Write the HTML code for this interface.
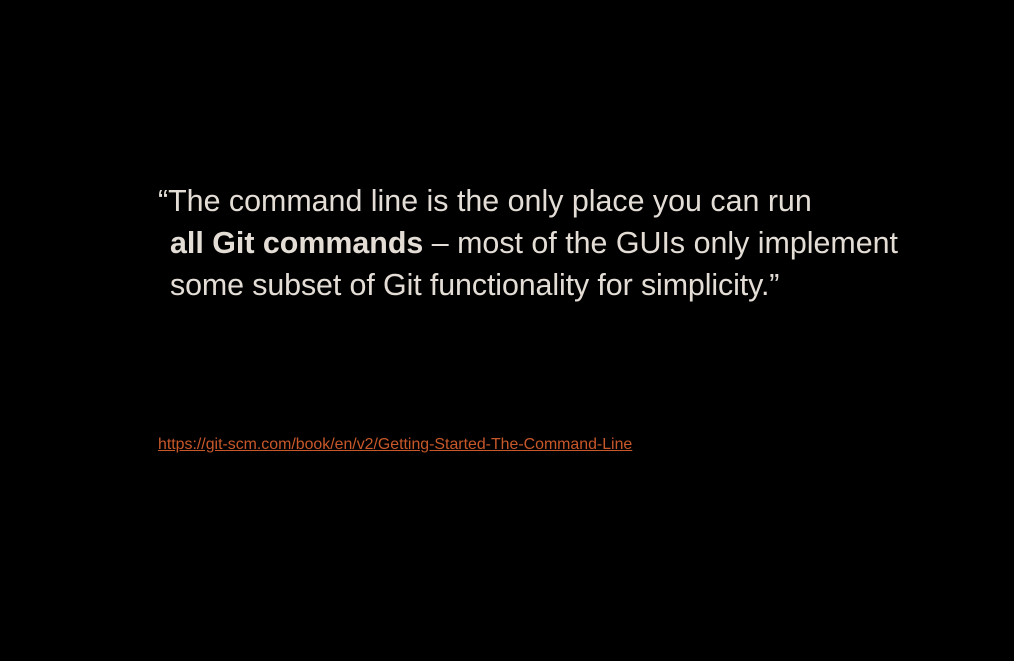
<!DOCTYPE html>
<html><head><style>
html,body{margin:0;padding:0;background:#000;width:1014px;height:661px;overflow:hidden}
.q{position:absolute;left:158px;top:180px;font-family:"Liberation Sans",Arial,sans-serif;font-size:30.4px;line-height:42px;color:#e3ddd6;white-space:nowrap}
.q div{padding-left:12px}
.q div.f{padding-left:0}
.l{position:absolute;left:158px;top:436px;font-family:"Liberation Sans",Arial,sans-serif;font-size:15.9px;color:#c8582a;text-decoration:underline;white-space:nowrap}
</style></head><body>
<div class="q">
<div class="f">“The command line is the only place you can run</div>
<div><b>all Git commands</b> – most of the GUIs only implement</div>
<div style="letter-spacing:-0.1px">some subset of Git functionality for simplicity.”</div>
</div>
<div class="l">https://git-scm.com/book/en/v2/Getting-Started-The-Command-Line</div>
</body></html>
